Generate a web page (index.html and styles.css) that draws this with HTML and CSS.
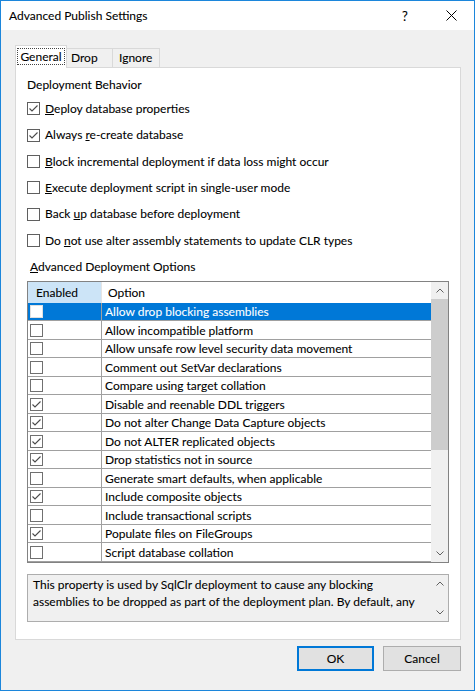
FILE: index.html
```html
<!DOCTYPE html>
<html>
<head>
<meta charset="utf-8">
<title>Advanced Publish Settings</title>
<link rel="stylesheet" href="styles.css">
</head>
<body>
<div class="window">
  <div class="titlebar">
    <span class="title">Advanced Publish Settings</span>
    <span class="tbtn help">?</span>
    <span class="tbtn close"><svg width="11" height="11" viewBox="0 0 11 11"><path d="M0.5 0.5 L10.5 10.5 M10.5 0.5 L0.5 10.5" stroke="#000" stroke-width="1" fill="none"/></svg></span>
  </div>
  <div class="client">
    <div class="tabs">
      <div class="tab tab-active"><span class="focus">General</span></div>
      <div class="tab tab-drop">Drop</div>
      <div class="tab tab-ignore">Ignore</div>
    </div>
    <div class="panel">
      <div class="group-label">Deployment Behavior</div>
      <div class="checks">
        <div class="check"><span class="box"><svg viewBox="0 0 11 11"><polyline points="1.5,5.5 4,8 9.5,2.5"/></svg></span><span class="lbl"><u>D</u>eploy database properties</span></div>
        <div class="check"><span class="box"><svg viewBox="0 0 11 11"><polyline points="1.5,5.5 4,8 9.5,2.5"/></svg></span><span class="lbl">Always <u>r</u>e-create database</span></div>
        <div class="check"><span class="box"></span><span class="lbl"><u>B</u>lock incremental deployment if data loss might occur</span></div>
        <div class="check"><span class="box"></span><span class="lbl"><u>E</u>xecute deployment script in single-user mode</span></div>
        <div class="check"><span class="box"></span><span class="lbl">Back <u>u</u>p database before deployment</span></div>
        <div class="check"><span class="box"></span><span class="lbl">Do <u>n</u>ot use alter assembly statements to update CLR types</span></div>
      </div>
      <div class="section-label"><u>A</u>dvanced Deployment Options</div>
      <div class="grid">
        <div class="grid-main">
          <div class="row header"><div class="c1">Enabled</div><div class="c2">Option</div></div>
          <div class="row selected"><div class="c1"><span class="gbox"></span></div><div class="c2">Allow drop blocking assemblies</div></div>
          <div class="row"><div class="c1"><span class="gbox"></span></div><div class="c2">Allow incompatible platform</div></div>
          <div class="row"><div class="c1"><span class="gbox"></span></div><div class="c2">Allow unsafe row level security data movement</div></div>
          <div class="row"><div class="c1"><span class="gbox"></span></div><div class="c2">Comment out SetVar declarations</div></div>
          <div class="row"><div class="c1"><span class="gbox"></span></div><div class="c2">Compare using target collation</div></div>
          <div class="row"><div class="c1"><span class="gbox"><svg viewBox="0 0 11 11"><polyline points="1.5,5.5 4,8 9.5,2.5"/></svg></span></div><div class="c2">Disable and reenable DDL triggers</div></div>
          <div class="row"><div class="c1"><span class="gbox"><svg viewBox="0 0 11 11"><polyline points="1.5,5.5 4,8 9.5,2.5"/></svg></span></div><div class="c2">Do not alter Change Data Capture objects</div></div>
          <div class="row"><div class="c1"><span class="gbox"><svg viewBox="0 0 11 11"><polyline points="1.5,5.5 4,8 9.5,2.5"/></svg></span></div><div class="c2">Do not ALTER replicated objects</div></div>
          <div class="row"><div class="c1"><span class="gbox"><svg viewBox="0 0 11 11"><polyline points="1.5,5.5 4,8 9.5,2.5"/></svg></span></div><div class="c2">Drop statistics not in source</div></div>
          <div class="row"><div class="c1"><span class="gbox"></span></div><div class="c2">Generate smart defaults, when applicable</div></div>
          <div class="row"><div class="c1"><span class="gbox"><svg viewBox="0 0 11 11"><polyline points="1.5,5.5 4,8 9.5,2.5"/></svg></span></div><div class="c2">Include composite objects</div></div>
          <div class="row"><div class="c1"><span class="gbox"></span></div><div class="c2">Include transactional scripts</div></div>
          <div class="row"><div class="c1"><span class="gbox"><svg viewBox="0 0 11 11"><polyline points="1.5,5.5 4,8 9.5,2.5"/></svg></span></div><div class="c2">Populate files on FileGroups</div></div>
          <div class="row"><div class="c1"><span class="gbox"></span></div><div class="c2">Script database collation</div></div>
        </div>
        <div class="vscroll">
          <div class="sbtn"><svg width="8" height="5" viewBox="0 0 8 5"><polyline points="0.5,4.5 4,1 7.5,4.5"/></svg></div>
          <div class="track"><div class="thumb"></div></div>
          <div class="sbtn"><svg width="8" height="5" viewBox="0 0 8 5"><polyline points="0.5,0.5 4,4 7.5,0.5"/></svg></div>
        </div>
      </div>
      <div class="desc">
        <div class="desc-text">This property is used by SqlClr deployment to cause any blocking<br>assemblies to be dropped as part of the deployment plan. By default, any</div>
        <div class="desc-scroll">
          <div class="sbtn"><svg width="8" height="5" viewBox="0 0 8 5"><polyline points="0.5,4.5 4,1 7.5,4.5"/></svg></div>
          <div class="sbtn"><svg width="8" height="5" viewBox="0 0 8 5"><polyline points="0.5,0.5 4,4 7.5,0.5"/></svg></div>
        </div>
      </div>
    </div>
    <div class="buttons">
      <button class="btn btn-ok">OK</button>
      <button class="btn btn-cancel">Cancel</button>
    </div>
  </div>
</div>
</body>
</html>
```

FILE: styles.css
```css
* { box-sizing: border-box; }
html, body { margin: 0; padding: 0; }
body {
  width: 475px;
  height: 691px;
  overflow: hidden;
  background: #f0f0f0;
  font-family: Lato, "Liberation Sans", sans-serif;
  font-size: 12px;
  color: #000;
  -webkit-text-stroke: 0.08px currentColor;
}
.window {
  width: 475px;
  height: 691px;
  border: 1px solid #1c86db;
  background: #f0f0f0;
  display: flex;
  flex-direction: column;
}
.titlebar {
  height: 29px;
  flex-shrink: 0;
  background: #fff;
  display: flex;
  align-items: center;
}
.title { flex: 1; padding-left: 8px; line-height: 16px; }
.tbtn {
  width: 46px;
  height: 29px;
  display: flex;
  align-items: center;
  justify-content: center;
}
.help { font-size: 13px; }
.client { padding: 15px 13px 0 14px; }
.tabs {
  display: flex;
  align-items: flex-end;
  height: 22px;
}
.tab {
  height: 19px;
  border: 1px solid #d9d9d9;
  border-bottom: none;
  background: #f0f0f0;
  display: flex;
  align-items: center;
  justify-content: flex-start;
  line-height: 16px;
}
.tab + .tab { border-left: none; }
.tab-active {
  width: 52px;
  height: 23px;
  margin-bottom: -1px;
  background: #fff;
  position: relative;
  z-index: 1;
  align-items: flex-start;
  justify-content: center;
  padding-top: 2px;
}
.focus {
  display: block;
  height: 17px;
  line-height: 15px;
  padding: 0 2px;
  border: 1px dotted #444;
}
.tab-drop { width: 46px; padding-left: 4px; }
.tab-ignore { width: 47px; padding-left: 6px; }
.panel {
  height: 573px;
  border: 1px solid #d9d9d9;
  background: #fff;
  padding: 9px 0 0 11px;
}
.group-label { line-height: 16px; }
.checks { margin-top: 2.8px; }
.check {
  height: 26.33px;
  display: flex;
  align-items: center;
  gap: 5px;
  line-height: 16px;
}
.box, .gbox {
  width: 13px;
  height: 13px;
  border: 1px solid #5f5f5f;
  background: #fff;
  display: flex;
  flex-shrink: 0;
}
.box svg, .gbox svg {
  width: 11px;
  height: 11px;
  fill: none;
  stroke: #4a4a4a;
  stroke-width: 1.1;
}
.gbox { border-color: #707070; }
.section-label {
  margin-top: 5px;
  padding-left: 3px;
  line-height: 16px;
}
.grid {
  margin-top: 6px;
  width: 422px;
  height: 282px;
  border: 1px solid #828282;
  display: flex;
}
.grid-main { flex: 1; display: flex; flex-direction: column; }
.row {
  height: 18.5px;
  display: flex;
  border-bottom: 1px solid #a0a0a0;
  line-height: 16px;
}
.row .c1 {
  width: 74px;
  border-right: 1px solid #a0a0a0;
  display: flex;
  align-items: center;
  padding-left: 2px;
}
.row .c2 {
  flex: 1;
  display: flex;
  align-items: center;
  padding-left: 3px;
  padding-top: 1px;
  white-space: nowrap;
}
.row.header {
  height: 21px;
  border-bottom: none;
}
.row.header .c1 {
  background: #cce4f7;
  padding-left: 8px;
  padding-top: 1px;
  border-right: 1px solid #e5e5e5;
}
.row.header .c2 { padding-left: 6px; }
.row.selected { background: #0078d7; color: #fff; }
.row.selected .gbox { border-color: #e0e0e0; }
.vscroll {
  width: 17px;
  background: #f0f0f0;
  display: flex;
  flex-direction: column;
  flex-shrink: 0;
}
.sbtn {
  height: 17px;
  display: flex;
  align-items: center;
  justify-content: center;
  flex-shrink: 0;
}
.sbtn svg { fill: none; stroke: #606060; stroke-width: 1; }
.track { flex: 1; }
.thumb { height: 151px; background: #cdcdcd; }
.desc {
  margin-top: 11px;
  width: 422px;
  height: 48px;
  border: 1px solid #adadad;
  background: #f0f0f0;
  display: flex;
  overflow: hidden;
}
.desc-text {
  flex: 1;
  padding: 1.5px 0 0 5px;
  line-height: 17px;
  white-space: nowrap;
  overflow: hidden;
}
.desc-scroll {
  width: 17px;
  flex-shrink: 0;
  display: flex;
  flex-direction: column;
  justify-content: space-between;
}
.buttons {
  margin-top: 6px;
  display: flex;
  justify-content: flex-end;
  gap: 9px;
}
.btn {
  height: 25px;
  background: #e1e1e1;
  border: 1px solid #adadad;
  font-family: inherit;
  font-size: 12px;
  color: #000;
  padding: 0;
  -webkit-text-stroke: 0.08px currentColor;
}
.btn-ok { width: 77px; border: 2px solid #0078d7; }
.btn-cancel { width: 78px; }
```
